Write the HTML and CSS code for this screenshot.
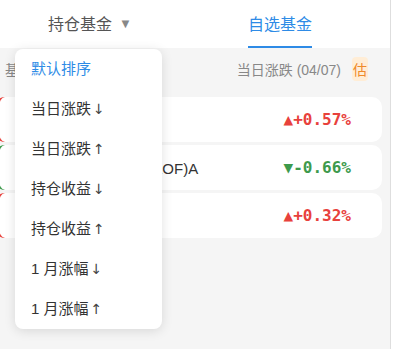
FILE: index.html
```html
<!DOCTYPE html>
<html lang="zh-CN">
<head>
<meta charset="UTF-8">
<meta name="viewport" content="width=device-width, initial-scale=1.0">
<title>基金</title>
<link rel="stylesheet" href="styles.css">
</head>
<body>

<div class="app">
  <div class="tabs">
    <div class="tab">持仓基金 <span class="caret">▼</span></div>
    <div class="tab active">自选基金</div>
  </div>

  <div class="list-head">
    <span class="col-name">基金名称</span>
    <span class="col-change">当日涨跌 (04/07) <span class="badge">估</span></span>
  </div>

  <div class="fund-list">
    <div class="fund up">
      <span class="fund-name">兴全合润混合</span>
      <span class="fund-change">▲+0.57%</span>
    </div>
    <div class="fund down">
      <span class="fund-name">招商中证白酒指数(LOF)A</span>
      <span class="fund-change">▼-0.66%</span>
    </div>
    <div class="fund up">
      <span class="fund-name">富国天惠成长混合</span>
      <span class="fund-change">▲+0.32%</span>
    </div>
  </div>

  <!-- sort menu, opened from the first tab -->
  <ul class="sort-menu">
    <li class="selected">默认排序</li>
    <li>当日涨跌<span class="arrow">↓</span></li>
    <li>当日涨跌<span class="arrow">↑</span></li>
    <li>持仓收益<span class="arrow">↓</span></li>
    <li>持仓收益<span class="arrow">↑</span></li>
    <li>1 月涨幅<span class="arrow">↓</span></li>
    <li>1 月涨幅<span class="arrow">↑</span></li>
  </ul>
</div>

</body>
</html>
```

FILE: styles.css
```css
body {
  margin: 0;
  background-color: #fff;
  font-family: "Liberation Sans", "Noto Sans CJK SC", sans-serif;
}

.app {
  position: relative;
  width: 390px;
  height: 349px;
  background-color: #f5f5f5;
  border-right: 1px solid #dedede;
  overflow: hidden;
}

.tabs {
  display: flex;
  height: 48px;
  padding-left: 48px;
  gap: 116px;
  background-color: #fff;
}

.tab {
  display: flex;
  align-items: center;
  font-size: 16px;
  color: #555;
  box-sizing: border-box;
  height: 48px;
  border-bottom: 2px solid transparent;
}

.tab .caret {
  font-size: 13px;
  color: #888;
  margin-left: 7px;
}

.tab.active {
  color: #2e8be6;
  border-bottom-color: #2e8be6;
}

.list-head {
  display: flex;
  justify-content: space-between;
  align-items: center;
  height: 42px;
  padding: 0 22px 0 5px;
  font-size: 14px;
  color: #888;
}

.col-change {
  display: flex;
  align-items: center;
}

.badge {
  margin-left: 11px;
  padding: 2px 1px;
  border-radius: 4px;
  background-color: #ffedd6;
  color: #ef8a2a;
}

.fund-list {
  display: flex;
  flex-direction: column;
  gap: 3px;
  margin-top: 7px;
  margin-left: -5px;
  width: 387px;
}

.fund {
  display: flex;
  justify-content: space-between;
  align-items: center;
  height: 45px;
  box-sizing: border-box;
  padding: 0 31px 0 30px;
  background-color: #fff;
  border-radius: 10px;
  border-left: 4px solid #e8413c;
}

.fund.down {
  border-left-color: #3d9a4c;
}

.fund-name {
  font-size: 15px;
  color: #333;
}

.fund-change {
  font-family: "DejaVu Sans Mono", monospace;
  font-weight: bold;
  font-size: 16px;
  color: #e8413c;
}

.fund.down .fund-change {
  color: #3d9a4c;
}

.sort-menu {
  position: absolute;
  left: 15px;
  top: 49px;
  width: 147px;
  margin: 0;
  padding: 0;
  list-style: none;
  background-color: #fff;
  border-radius: 8px;
  box-shadow: 0 2px 12px rgba(0, 0, 0, 0.12);
}

.sort-menu li {
  height: 40px;
  line-height: 40px;
  padding-left: 16px;
  font-size: 15px;
  color: #333;
}

.sort-menu li.selected {
  color: #2e8be6;
}

.sort-menu .arrow {
  font-family: "DejaVu Sans", sans-serif;
  font-size: 14px;
  margin-left: 2px;
  color: #444;
}
```
